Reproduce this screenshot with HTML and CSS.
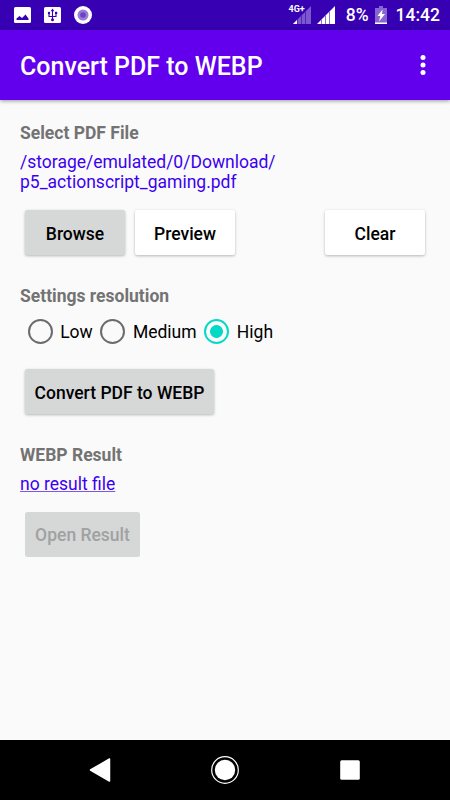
FILE: index.html
```
<!DOCTYPE html>
<html lang="en">
<head>
  <meta charset="UTF-8">
  <meta name="viewport" content="width=device-width, initial-scale=1.0">
  <title>Convert PDF to WEBP</title>
  <link rel="stylesheet" href="styles.css">
</head>
<body>
  <div class="status-bar">
    <div class="notifications">
      <svg width="17" height="16" viewBox="0 0 17 16">
        <rect width="17" height="16" rx="1.5" fill="#fff"/>
        <path d="M2.500 13V11.500L5.500 9L8 11L11.500 7.500L14.500 11.500V13Z" fill="#3700b3"/>
      </svg>
      <svg width="17" height="16" viewBox="0 0 17 16">
        <rect width="17" height="16" rx="1.5" fill="#fff"/>
        <path d="M8.500 3V13M5 6V9.500H12V6" fill="none" stroke="#3700b3" stroke-width="1.1"/>
        <path d="M8.500 1.500L10.300 4.300H6.700Z" fill="#3700b3"/>
        <circle cx="5" cy="6" r="1.200" fill="#3700b3"/>
        <rect x="11" y="4.800" width="2.200" height="2.200" fill="#3700b3"/>
        <circle cx="8.500" cy="12.700" r="1.500" fill="#3700b3"/>
      </svg>
      <svg width="18" height="18" viewBox="0 0 18 18">
        <circle cx="9" cy="9" r="9" fill="#fff"/>
        <circle cx="9" cy="9" r="5.500" fill="#9b7ad9"/>
        <circle cx="9" cy="9" r="2.800" fill="#6d40c6"/>
      </svg>
    </div>
    <div class="system">
      <div class="network">
        <span class="network-type">4G+</span>
        <svg width="18" height="18" viewBox="0 0 18 18">
          <path d="M0 18L18 0V18Z" fill="#7c57cd"/>
          <path d="M0 18L4 14V18Z" fill="#fff"/>
          <path d="M4.500 13V18M8.500 9V18M12.500 5V18" stroke="#5425bd" stroke-width="1"/>
        </svg>
      </div>
      <svg class="signal" width="18" height="18" viewBox="0 0 18 18">
        <path d="M0 18L18 0V18Z" fill="#fff"/>
        <path d="M4.500 13V18M8.500 9V18M12.500 5V18" stroke="#8e70d4" stroke-width="1"/>
      </svg>
      <span class="percent">8%</span>
      <svg class="battery" width="12" height="18" viewBox="0 0 12 18">
        <path d="M4 0H8V2H12V18H0V2H4Z" fill="#8866d1"/>
        <rect y="16.500" width="12" height="1.500" fill="#fff"/>
        <path d="M7.500 3.500L2.500 10H5.300L4 15.500L10 8H7Z" fill="#fff"/>
      </svg>
      <span class="clock">14:42</span>
    </div>
  </div>

  <header class="app-bar">
    <h1>Convert PDF to WEBP</h1>
    <svg class="more" width="6" height="20" viewBox="0 0 6 20" fill="#fff">
      <circle cx="3" cy="2.500" r="2.500"/>
      <circle cx="3" cy="10" r="2.500"/>
      <circle cx="3" cy="17.500" r="2.500"/>
    </svg>
  </header>

  <main>
    <h2>Select PDF File</h2>
    <p class="path">/storage/emulated/0/Download/<br>p5_actionscript_gaming.pdf</p>
    <div class="btn-row">
      <button class="btn">Browse</button>
      <button class="btn white">Preview</button>
      <button class="btn white clear">Clear</button>
    </div>

    <h2>Settings resolution</h2>
    <div class="radio-row">
      <label><input type="radio" name="resolution"><span>Low</span></label>
      <label><input type="radio" name="resolution"><span>Medium</span></label>
      <label><input type="radio" name="resolution" checked><span>High</span></label>
    </div>
    <div class="btn-row">
      <button class="btn convert">Convert PDF to WEBP</button>
    </div>

    <h2>WEBP Result</h2>
    <p class="path result">no result file</p>
    <div class="btn-row">
      <button class="btn open" disabled>Open Result</button>
    </div>
  </main>

  <nav class="nav-bar">
    <svg width="26" height="28" viewBox="0 0 26 28">
      <path d="M3.500 14L22.500 3V25Z" fill="#fff" stroke="#fff" stroke-width="1.500" stroke-linejoin="round"/>
    </svg>
    <svg width="28" height="28" viewBox="0 0 28 28">
      <circle cx="14" cy="14" r="13.300" fill="none" stroke="#fff" stroke-width="1.200"/>
      <circle cx="14" cy="14" r="10.200" fill="#fff"/>
    </svg>
    <svg width="26" height="28" viewBox="0 0 26 28">
      <rect x="3.200" y="4.200" width="19.600" height="19.600" rx="1.500" fill="#fff"/>
    </svg>
  </nav>
</body>
</html>
```
FILE: styles.css
```
* {
  box-sizing: border-box;
}
body {
  margin: 0;
  height: 100vh;
  display: flex;
  flex-direction: column;
  background: #fafafa;
  font-family: Roboto, sans-serif;
  font-size: 17.5px;
  line-height: 21px;
  color: #000;
}
svg {
  display: block;
  flex: none;
}
.status-bar {
  height: 30px;
  padding: 0 10px 0 14px;
  display: flex;
  justify-content: space-between;
  align-items: center;
  background: #3700b3;
  color: #fff;
}
.notifications {
  display: flex;
  align-items: center;
  gap: 13px;
}
.system {
  display: flex;
  align-items: center;
}
.network {
  display: flex;
}
.network-type {
  font-size: 9px;
  line-height: 6px;
  font-weight: 700;
  margin-right: -12px;
  z-index: 1;
}
.signal {
  margin-left: 6px;
}
.percent,
.clock {
  padding-top: 1px;
  font-weight: 500;
}
.percent {
  margin-left: 11px;
}
.battery {
  margin-left: 6px;
}
.clock {
  margin-left: 9px;
}
.app-bar {
  height: 70px;
  padding: 0 24.5px 0 20px;
  display: flex;
  justify-content: space-between;
  align-items: center;
  background: #6200ee;
  color: #fff;
  box-shadow: 0 1px 4px rgba(0,0,0,0.4);
}
h1 {
  margin: 0;
  padding-top: 3px;
  font-size: 25px;
  line-height: 30px;
  font-weight: 500;
}
main {
  flex: 1;
  padding: 23px 20px 0;
}
h2 {
  margin: 0 0 8px;
  font-size: 17.5px;
  line-height: 21px;
  font-weight: 700;
  color: #737373;
}
.path {
  margin: 0 0 18px;
  line-height: 20px;
  color: #3c00f0;
}
.result {
  margin-bottom: 17.5px;
  text-decoration: underline;
  text-decoration-color: #7d55f3;
}
.btn-row {
  display: flex;
  gap: 10px;
  padding: 0 5px;
  margin-bottom: 31px;
}
.btn {
  width: 100px;
  height: 45px;
  padding: 2px 0 0;
  border: none;
  border-radius: 2.5px;
  background: #d6d7d7;
  font-family: inherit;
  font-size: 17.5px;
  font-weight: 500;
  color: #000;
  box-shadow: 0 1px 3px rgba(0,0,0,0.28);
}
.white {
  background: #fff;
}
.clear {
  margin-left: auto;
}
.convert {
  width: 189px;
}
.open {
  width: 115px;
  color: #a0a1a1;
  box-shadow: none;
}
.radio-row {
  display: flex;
  gap: 7.5px;
  padding-left: 7.5px;
  margin-bottom: 20px;
}
.radio-row label {
  display: flex;
  align-items: center;
  gap: 7.7px;
}
.radio-row input {
  appearance: none;
  width: 25px;
  height: 25px;
  margin: 4px 0 5px;
  border: 2.5px solid #6b6b6b;
  border-radius: 50%;
}
.radio-row input:checked {
  border-color: #03dac5;
  background: radial-gradient(circle, #03dac5 6px, transparent 6.8px);
}
.nav-bar {
  height: 60px;
  padding: 0 87px;
  display: flex;
  justify-content: space-between;
  align-items: center;
  background: #000;
}
```
